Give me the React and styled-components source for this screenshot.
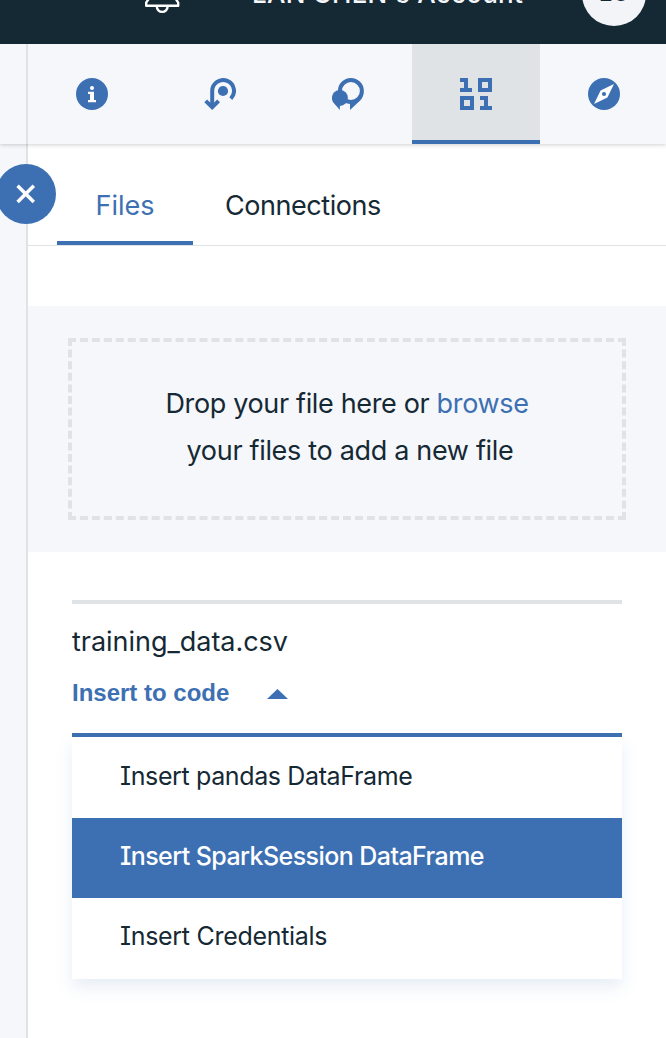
import React from "react";
import styled, { createGlobalStyle, css } from "styled-components";

const blue = "#3d70b2";
const ink = "#152935";
const mist = "#f5f7fb";
const rule = "#dfe3e6";

const GlobalStyle = createGlobalStyle`
  *, *::before, *::after { box-sizing: border-box; }
  body {
    margin: 0;
    background: #fff;
    color: ${ink};
    font-family: Inter, "Noto Sans", sans-serif;
    font-weight: 400;
    font-feature-settings: "cv08" 1;
  }
  button { font: inherit; font-feature-settings: inherit; color: inherit; background: none; border: 0; padding: 0; }
`;

const Page = styled.div`
  width: 666px;
  height: 1038px;
  overflow: hidden;
  display: flex;
  flex-direction: column;
`;

const Header = styled.header`
  flex: none;
  height: 44px;
  overflow: hidden;
  background: ${ink};
  display: flex;
  align-items: flex-end;
`;

const HeaderRow = styled.div`
  flex: none;
  width: 666px;
  height: 100px;
  display: flex;
  align-items: center;
  padding: 0 20px 0 142px;
`;

const AccountName = styled.span`
  margin-left: 70px;
  width: 275px;
  white-space: nowrap;
  color: ${mist};
  font-weight: 500;
  font-size: 26px;
  line-height: 32px;
  letter-spacing: ${(p) => p.$track}px;
`;

const Avatar = styled.span`
  flex: none;
  margin-left: auto;
  width: 64px;
  height: 64px;
  border-radius: 50%;
  background: #f3f4f8;
  color: ${ink};
  display: flex;
  align-items: center;
  justify-content: center;
  font-size: 24px;
  font-weight: 500;
  line-height: 32px;
  padding-bottom: 2px;
`;

const Toolbar = styled.nav`
  flex: none;
  position: relative;
  z-index: 1;
  height: 100px;
  background: ${mist};
  box-shadow: 0 1px 4px rgba(0, 0, 0, 0.19);
  display: flex;
`;

const ToolbarEdge = styled.div`
  flex: none;
  width: 28px;
  border-right: 2px solid ${rule};
`;

const Tool = styled.button`
  flex: none;
  width: 128px;
  display: flex;
  align-items: center;
  justify-content: center;
  ${(p) => p.$active && css`
    background: ${rule};
    box-shadow: inset 0 -4px ${blue};
  `}
`;

const Icon = styled.svg`
  display: block;
  flex: none;
  color: ${blue};
`;

const Body = styled.div`
  flex: 1;
  display: flex;
`;

const Gutter = styled.aside`
  position: relative;
  flex: none;
  width: 28px;
  background: ${mist};
  border-right: 2px solid ${rule};
`;

const CloseButton = styled.button`
  position: absolute;
  top: 20px;
  left: -4px;
  width: 60px;
  height: 60px;
  border-radius: 50%;
  background: ${blue};
  display: flex;
  align-items: center;
  justify-content: center;
`;

const Panel = styled.main`
  flex: 1;
  min-width: 0;
`;

const Tabs = styled.div`
  height: 102px;
  border-bottom: 1px solid ${rule};
  padding-left: 29px;
  display: flex;
  align-items: flex-end;
  gap: 32px;
`;

const Tab = styled.button`
  width: ${(p) => p.$width}px;
  height: 80px;
  padding-top: 6px;
  font-size: 27px;
  line-height: 34px;
  white-space: nowrap;
  letter-spacing: ${(p) => p.$track}px;
  border-bottom: 4px solid ${(p) => (p.$active ? blue : "transparent")};
  color: ${(p) => (p.$active ? blue : ink)};
`;

const DropArea = styled.section`
  margin-top: 60px;
  height: 246px;
  padding: 32px 40px;
  background: ${mist};
`;

const DropTarget = styled.div`
  height: 182px;
  border: 4px dashed #e0e2e5;
  display: flex;
  flex-direction: column;
  align-items: center;
  padding-top: 38px;
`;

const DropLine = styled.div`
  font-size: 27px;
  line-height: 47px;
  white-space: nowrap;
  padding-left: ${(p) => p.$indent || 0}px;
  letter-spacing: ${(p) => p.$track}px;
`;

const Browse = styled.span`
  color: ${blue};
`;

const FileCard = styled.section`
  margin: 48px 44px 0;
  border-top: 4px solid ${rule};
`;

const FileName = styled.div`
  padding-top: 18px;
  font-size: 27px;
  line-height: 40px;
  letter-spacing: ${(p) => p.$track}px;
`;

const InsertToggle = styled.button`
  width: 100%;
  height: 75px;
  display: flex;
  align-items: center;
  gap: 38px;
  padding-bottom: 9px;
  border-bottom: 4px solid ${blue};
  color: ${blue};
  font-family: "Liberation Sans", Arial, sans-serif;
  font-weight: 700;
  font-size: 24px;
  line-height: 28px;
`;

const Menu = styled.ul`
  list-style: none;
  margin: 0;
  padding: 1px 0;
  background: #fff;
  box-shadow: 0 8px 16px rgba(61, 112, 178, 0.12);
`;

const MenuItem = styled.li`
  height: 80px;
  padding: 0 48px 4px;
  display: flex;
  align-items: center;
  font-size: 25px;
  white-space: nowrap;
  letter-spacing: ${(p) => p.$track}px;
  ${(p) => p.$active && css`
    background: ${blue};
    color: #fff;
    font-weight: 500;
  `}
`;

const BellIcon = () => (
  <Icon width="40" height="40" viewBox="0 0 40 40" fill="none" stroke="#fff" strokeWidth="2.4">
    <path d="M4.2 31.8v-3.2l4-6V14a12 12 0 0 1 24 0v8.6l4 6v3.2z" strokeLinejoin="round" />
    <path d="M14.8 32.5a5.4 5.4 0 0 0 10.8 0" />
  </Icon>
);

const InfoIcon = () => (
  <Icon width="32" height="32" viewBox="0 0 32 32">
    <circle cx="16" cy="16" r="16" fill="currentColor" />
    <circle cx="16" cy="10" r="2" fill="#fff" />
    <path d="M12 13.8h6v8.2h2v2.2h-8V22h2v-6h-2z" fill="#fff" />
  </Icon>
);

const ReturnIcon = () => (
  <Icon width="32" height="32" viewBox="0 0 32 32">
    <path d="M8.2 27V13a10.9 10.9 0 1 1 18.6 7.7" fill="none" stroke="currentColor" strokeWidth="4" />
    <circle cx="19" cy="13" r="5.1" fill="currentColor" />
    <path d="M.3 24.3 3.1 21.5 6.2 24.4h4l3-2.9 2.8 2.8L8.2 32z" fill="currentColor" />
  </Icon>
);

const CommentsIcon = () => (
  <Icon width="32" height="32" viewBox="0 0 32 32">
    <circle cx="18.9" cy="13" r="11" fill="none" stroke="currentColor" strokeWidth="4" />
    <path d="M18 24.5 29 18l1.7.6Q29.8 21 27.6 23L18 32z" fill="currentColor" />
    <circle cx="7.9" cy="19.9" r="8" fill="currentColor" />
    <path d="M2.2 25.6 7.9 24V32z" fill="currentColor" />
  </Icon>
);

const BinaryIcon = () => (
  <Icon width="32" height="32" viewBox="0 0 32 32" fill="currentColor" fillRule="evenodd">
    <path d="M0 0h8v10h4v4H0v-4h4V4H0z" />
    <path d="M18 0h14v14H18zM22 4v6h6V4z" />
    <path d="M0 18h14v14H0zM4 22v6h6v-6z" />
    <path d="M20 18h8v10h4v4H20v-4h4v-6h-4z" />
  </Icon>
);

const CompassIcon = () => (
  <Icon width="32" height="32" viewBox="0 0 32 32">
    <circle cx="16" cy="16" r="16" fill="currentColor" />
    <path d="M26 6 19.4 19.4 6 26l6.6-13.4z" fill="#fff" />
    <circle cx="16" cy="16" r="2.1" fill="currentColor" />
  </Icon>
);

const CloseIcon = () => (
  <Icon width="20" height="20" viewBox="0 0 20 20">
    <path d="M1.6 1.8 17.8 18M17.8 1.8 1.6 18" stroke="#fff" strokeWidth="3.5" />
  </Icon>
);

const CaretUp = () => (
  <Icon width="21" height="12" viewBox="0 0 21 12">
    <path d="M0 12 10.5 2 21 12z" fill="currentColor" />
  </Icon>
);

const tools = [
  { id: "info", Glyph: InfoIcon },
  { id: "return", Glyph: ReturnIcon },
  { id: "comments", Glyph: CommentsIcon },
  { id: "data", Glyph: BinaryIcon, active: true },
  { id: "explore", Glyph: CompassIcon },
];

const menuItems = [
  { label: "Insert pandas DataFrame", track: -0.37 },
  { label: "Insert SparkSession DataFrame", track: -0.57, active: true },
  { label: "Insert Credentials", track: -0.3 },
];

export default function App() {
  return (
    <Page>
      <GlobalStyle />
      <Header>
        <HeaderRow>
          <BellIcon />
          <AccountName $track={0.25}>LAN CHEN's Account</AccountName>
          <Avatar>LC</Avatar>
        </HeaderRow>
      </Header>
      <Toolbar>
        <ToolbarEdge />
        {tools.map(({ id, Glyph, active }) => (
          <Tool key={id} $active={active}>
            <Glyph />
          </Tool>
        ))}
      </Toolbar>
      <Body>
        <Gutter>
          <CloseButton>
            <CloseIcon />
          </CloseButton>
        </Gutter>
        <Panel>
          <Tabs>
            <Tab $active $width={136} $track={0}>Files</Tab>
            <Tab $width={155} $track={-0.45}>Connections</Tab>
          </Tabs>
          <DropArea>
            <DropTarget>
              <DropLine $track={-0.35}>
                Drop your file here or <Browse>browse</Browse>
              </DropLine>
              <DropLine $track={-0.32} $indent={6}>your files to add a new file</DropLine>
            </DropTarget>
          </DropArea>
          <FileCard>
            <FileName $track={-0.03}>training_data.csv</FileName>
            <InsertToggle>
              Insert to code
              <CaretUp />
            </InsertToggle>
            <Menu>
              {menuItems.map(({ label, track, active }) => (
                <MenuItem key={label} $active={active} $track={track}>{label}</MenuItem>
              ))}
            </Menu>
          </FileCard>
        </Panel>
      </Body>
    </Page>
  );
}
